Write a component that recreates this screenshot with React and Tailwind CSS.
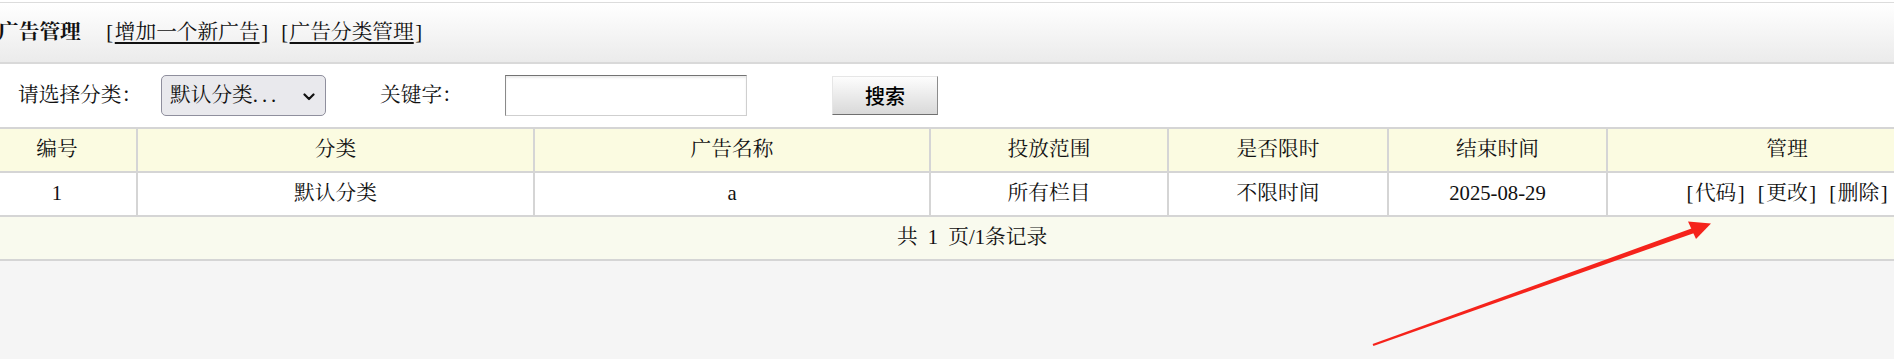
import React from "react";

const F = "font-['Liberation_Serif','Noto_Serif_CJK_SC','Noto_Sans_CJK_SC',serif]";

const cols = ["编号", "分类", "广告名称", "投放范围", "是否限时", "结束时间", "管理"];

function Cell({ children, className = "" }) {
  return (
    <div className={"flex items-center justify-center h-[42px] text-[20.7px] text-[#111] " + className}>
      {children}
    </div>
  );
}

function Bracketed({ children, underline = false }) {
  return (
    <span className="whitespace-nowrap inline-flex items-baseline">
      <span className="inline-block w-[10px] text-center">[</span>
      <span className={underline ? "underline underline-offset-[3px]" : ""}>{children}</span>
      <span className="inline-block w-[10px] text-center">]</span>
    </span>
  );
}

export default function App() {
  return (
    <div className={"relative w-[1894px] h-[359px] overflow-hidden bg-[#f5f5f5] " + F}>
      {/* top header bar */}
      <div className="bg-white pt-[2px]">
        <div className="border-t border-b-2 border-t-[#dcdcdc] border-b-[#d9d9d9] h-[62px] bg-linear-to-b from-white to-[#ebebeb] flex items-center text-[20.7px] text-[#111]">
          <span className="font-bold -ml-[2px] whitespace-nowrap">广告管理</span>
          <span className="ml-[24px]">
            <Bracketed underline>增加一个新广告</Bracketed>
          </span>
          <span className="ml-[10px]">
            <Bracketed underline>广告分类管理</Bracketed>
          </span>
        </div>
      </div>

      {/* filter row */}
      <div className="bg-white h-[63px] flex items-center pl-[18px] text-[20.7px] text-[#111]">
        <span className="whitespace-nowrap w-[143px]">请选择分类：</span>
        <div className="w-[165px] h-[41px] rounded-[5px] border border-[#8f8f9d] bg-[#e9e9ed] flex items-center pl-[8px] pr-[10px] justify-between">
          <span className="whitespace-nowrap">
            默认分类<span className="tracking-[4px]">...</span>
          </span>
          <svg width="12" height="8" viewBox="0 0 12 8" className="mt-[2px]">
            <path d="M1.5 1.5 L6 6 L10.5 1.5" fill="none" stroke="#111" strokeWidth="2.2" strokeLinecap="round" strokeLinejoin="round" />
          </svg>
        </div>
        <span className="ml-[54px] whitespace-nowrap w-[125px]">关键字：</span>
        <div className="w-[242px] h-[41px] bg-white border border-t-[#737373] border-l-[#8a8a8a] border-r-[#cfcfcf] border-b-[#cfcfcf] shadow-[inset_0_2px_2px_rgba(0,0,0,0.08)]" />
        <button className="ml-[85px] w-[106px] h-[39px] border border-t-[#e6e6e6] border-l-[#e6e6e6] border-r-[#8c8c8c] border-b-[#6f6f6f] bg-linear-to-b from-[#fdfdfd] to-[#d9d9d9] flex items-center justify-center text-[20px] font-medium text-black font-['Noto_Sans_CJK_SC',sans-serif]">
          搜索
        </button>
      </div>

      {/* table */}
      <div className="-ml-[22px] w-[1988px] bg-[#d5d5d5] flex flex-col gap-[2px] py-[2px]">
        <div className="grid grid-cols-[158px_395px_394px_236px_218px_217px_358px] gap-x-[2px]">
          {cols.map((c) => (
            <Cell key={c} className="bg-[#fbfbe1]">{c}</Cell>
          ))}
        </div>
        <div className="grid grid-cols-[158px_395px_394px_236px_218px_217px_358px] gap-x-[2px]">
          <Cell className="bg-white">1</Cell>
          <Cell className="bg-white">默认分类</Cell>
          <Cell className="bg-white">a</Cell>
          <Cell className="bg-white">所有栏目</Cell>
          <Cell className="bg-white">不限时间</Cell>
          <Cell className="bg-white">2025-08-29</Cell>
          <Cell className="bg-white gap-[10px]">
            <Bracketed>代码</Bracketed>
            <Bracketed>更改</Bracketed>
            <Bracketed>删除</Bracketed>
          </Cell>
        </div>
        <div className="bg-[#f9faee] h-[42px] flex items-center justify-center text-[20.7px] text-[#111] whitespace-pre [word-spacing:5px]">
          共 1 页/1条记录
        </div>
      </div>

      {/* red annotation arrow */}
      <svg className="absolute left-0 top-0 pointer-events-none" width="1894" height="359" viewBox="0 0 1894 359">
        <polygon points="1373.4,346.1 1372.6,343.9 1694.2,227.6 1695.8,232.4" fill="#f5231b" />
        <polygon points="1711,223.5 1688,221.5 1696,239" fill="#f5231b" />
      </svg>
    </div>
  );
}
